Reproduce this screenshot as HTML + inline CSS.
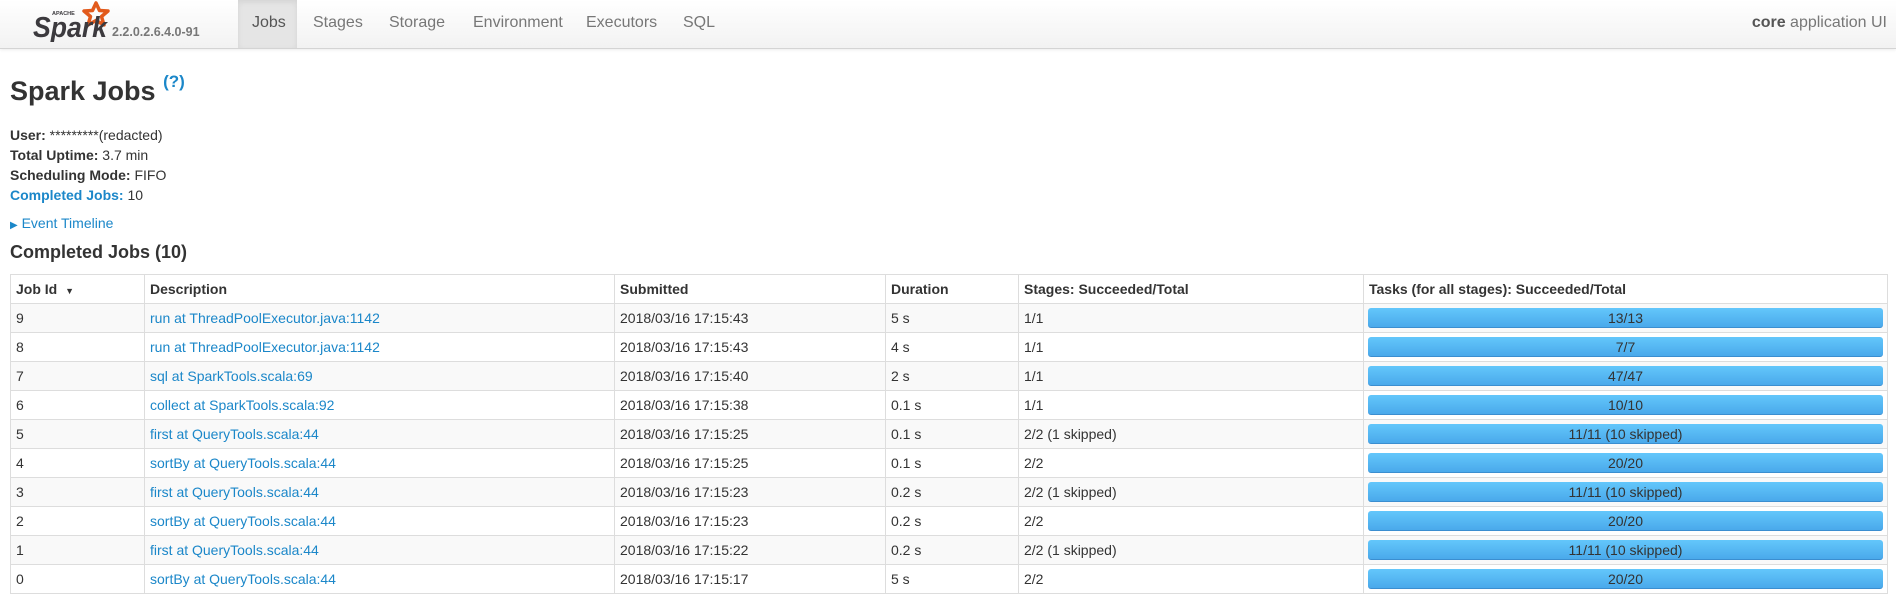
<!DOCTYPE html>
<html><head><meta charset="utf-8"><style>
*{box-sizing:border-box}
body{margin:0;width:1896px;height:610px;overflow:hidden;font-family:"Liberation Sans",Arial,sans-serif;font-size:14.5px;color:#333;background:#fff}
.nav{position:absolute;left:0;top:0;width:1896px;height:49px;background:linear-gradient(#fff,#f2f2f2);border-bottom:1px solid #d4d4d4;box-shadow:0 1px 3px rgba(0,0,0,.08)}
.nav .tab{position:absolute;top:0;height:48px;line-height:46px;color:#777;font-size:16px}
.nav .active{background:#e5e5e5;box-shadow:inset 0 2px 6px rgba(0,0,0,.08);color:#555}
.ver{position:absolute;left:112px;top:25px;font-size:12.5px;font-weight:bold;color:#777}
.right{position:absolute;right:9px;top:0;line-height:46px;font-size:16px;color:#777}
a{color:#1b87c9;text-decoration:none}
h3{position:absolute;left:10px;top:76px;margin:0;font-size:27px;font-weight:bold;color:#333}
h3 sup{font-size:17px;color:#1b87c9;vertical-align:top;position:relative;top:-4px}
.info{position:absolute;left:10px;top:125px;line-height:20px;font-size:14px}
.et{position:absolute;left:10px;top:215px;font-size:14px;color:#1b87c9}
h4{position:absolute;left:10px;top:242px;margin:0;font-size:18px;font-weight:bold}
table{position:absolute;left:10px;top:274px;width:1878px;border-collapse:collapse;font-size:14px}
td,th{border:1px solid #ddd;height:29px;padding:0 5px;text-align:left;vertical-align:middle}
th{font-weight:bold}
tbody tr:nth-child(odd) td{background:#f9f9f9}
.bar{height:20px;border-radius:3px;background:linear-gradient(#63c7fb,#4aa9eb);border-bottom:1px solid #3b8ed0;text-align:center;line-height:20px;color:#333;font-size:14px;margin:0 -1px}
td.p{padding:0 5px}
</style></head><body>
<div class="nav">
<svg style="position:absolute;left:30px;top:0" width="84" height="42" viewBox="0 0 84 42">
<path d="M66 3 L69.5 10.5 L78 11 L71.5 16.5 L74 25 L66 20.5 L58 25 L60.5 16.5 L54 11 L62.5 10.5 Z" fill="none" stroke="#e25a1c" stroke-width="3.5" stroke-linejoin="round"/>
<text x="3" y="37" font-family="Liberation Sans,sans-serif" font-size="29" font-style="italic" font-weight="bold" fill="#3c3a3e" textLength="74" lengthAdjust="spacingAndGlyphs">Spark</text>
<text x="22" y="15" font-family="Liberation Sans,sans-serif" font-size="5.5" font-weight="bold" fill="#3c3a3e">APACHE</text>
</svg>
<div class="ver">2.2.0.2.6.4.0-91</div>
<div class="tab active" style="left:238px;width:59px;padding-left:14px">Jobs</div>
<div class="tab" style="left:313px">Stages</div>
<div class="tab" style="left:389px">Storage</div>
<div class="tab" style="left:473px">Environment</div>
<div class="tab" style="left:586px">Executors</div>
<div class="tab" style="left:683px">SQL</div>
<div class="right"><b style="color:#555">core</b> application UI</div>
</div>
<h3>Spark Jobs <sup>(?)</sup></h3>
<div class="info"><b>User:</b> *********(redacted)<br><b>Total Uptime:</b> 3.7 min<br><b>Scheduling Mode:</b> FIFO<br><a><b>Completed Jobs:</b></a> 10</div>
<div class="et"><span style="font-size:10px">&#9654;</span> Event Timeline</div>
<h4>Completed Jobs (10)</h4>
<table>
<colgroup><col style="width:134px"><col style="width:470px"><col style="width:271px"><col style="width:133px"><col style="width:345px"><col></colgroup>
<thead><tr><th>Job Id <span style="font-size:9px;margin-left:4px">&#9660;</span></th><th>Description</th><th>Submitted</th><th>Duration</th><th>Stages: Succeeded/Total</th><th>Tasks (for all stages): Succeeded/Total</th></tr></thead>
<tbody>
<tr><td>9</td><td><a>run at ThreadPoolExecutor.java:1142</a></td><td>2018/03/16 17:15:43</td><td>5 s</td><td>1/1</td><td class="p"><div class="bar">13/13</div></td></tr>
<tr><td>8</td><td><a>run at ThreadPoolExecutor.java:1142</a></td><td>2018/03/16 17:15:43</td><td>4 s</td><td>1/1</td><td class="p"><div class="bar">7/7</div></td></tr>
<tr><td>7</td><td><a>sql at SparkTools.scala:69</a></td><td>2018/03/16 17:15:40</td><td>2 s</td><td>1/1</td><td class="p"><div class="bar">47/47</div></td></tr>
<tr><td>6</td><td><a>collect at SparkTools.scala:92</a></td><td>2018/03/16 17:15:38</td><td>0.1 s</td><td>1/1</td><td class="p"><div class="bar">10/10</div></td></tr>
<tr><td>5</td><td><a>first at QueryTools.scala:44</a></td><td>2018/03/16 17:15:25</td><td>0.1 s</td><td>2/2 (1 skipped)</td><td class="p"><div class="bar">11/11 (10 skipped)</div></td></tr>
<tr><td>4</td><td><a>sortBy at QueryTools.scala:44</a></td><td>2018/03/16 17:15:25</td><td>0.1 s</td><td>2/2</td><td class="p"><div class="bar">20/20</div></td></tr>
<tr><td>3</td><td><a>first at QueryTools.scala:44</a></td><td>2018/03/16 17:15:23</td><td>0.2 s</td><td>2/2 (1 skipped)</td><td class="p"><div class="bar">11/11 (10 skipped)</div></td></tr>
<tr><td>2</td><td><a>sortBy at QueryTools.scala:44</a></td><td>2018/03/16 17:15:23</td><td>0.2 s</td><td>2/2</td><td class="p"><div class="bar">20/20</div></td></tr>
<tr><td>1</td><td><a>first at QueryTools.scala:44</a></td><td>2018/03/16 17:15:22</td><td>0.2 s</td><td>2/2 (1 skipped)</td><td class="p"><div class="bar">11/11 (10 skipped)</div></td></tr>
<tr><td>0</td><td><a>sortBy at QueryTools.scala:44</a></td><td>2018/03/16 17:15:17</td><td>5 s</td><td>2/2</td><td class="p"><div class="bar">20/20</div></td></tr>
</tbody></table>
</body></html>
